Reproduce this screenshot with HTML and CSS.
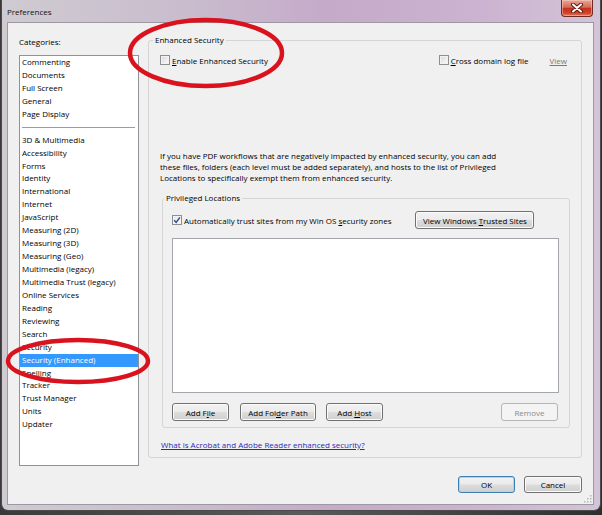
FILE: index.html
```html
<!DOCTYPE html>
<html lang="en">
<head>
    <meta charset="UTF-8">
    <title>Preferences</title>
    <link rel="stylesheet" href="styles.css">
</head>
<body>
    <div class="window">
        <div class="titlebar">
            <span class="title">Preferences</span>
            <button class="close-btn" title="Close">
                <svg width="14" height="10" viewBox="0 0 14 10">
                    <path d="M3 1.5 L11 8.5 M11 1.5 L3 8.5" stroke="#5a1a10" stroke-width="4" stroke-linecap="round"/>
                    <path d="M3 1.5 L11 8.5 M11 1.5 L3 8.5" stroke="#fff" stroke-width="2" stroke-linecap="round"/>
                </svg>
            </button>
        </div>

        <div class="client">
            <div class="main">
                <div class="sidebar">
                    <div class="cat-label">Categories:</div>
                    <ul class="cat-list">
                        <li>Commenting</li>
                        <li>Documents</li>
                        <li>Full Screen</li>
                        <li>General</li>
                        <li>Page Display</li>
                        <li class="sep"></li>
                        <li>3D &amp; Multimedia</li>
                        <li>Accessibility</li>
                        <li>Forms</li>
                        <li>Identity</li>
                        <li>International</li>
                        <li>Internet</li>
                        <li>JavaScript</li>
                        <li>Measuring (2D)</li>
                        <li>Measuring (3D)</li>
                        <li>Measuring (Geo)</li>
                        <li>Multimedia (legacy)</li>
                        <li>Multimedia Trust (legacy)</li>
                        <li>Online Services</li>
                        <li>Reading</li>
                        <li>Reviewing</li>
                        <li>Search</li>
                        <li>Security</li>
                        <li class="selected">Security (Enhanced)</li>
                        <li>Spelling</li>
                        <li>Tracker</li>
                        <li>Trust Manager</li>
                        <li>Units</li>
                        <li>Updater</li>
                    </ul>
                </div>

                <fieldset class="group enhanced">
                    <legend>Enhanced Security</legend>
                    <div class="top-row">
                        <label class="check"><span class="box"></span><span><u>E</u>nable Enhanced Security</span></label>
                        <div class="log">
                            <label class="check"><span class="box"></span><span><u>C</u>ross domain log file</span></label>
                            <a class="view-link">View</a>
                        </div>
                    </div>

                    <p class="note">
                        If you have PDF workflows that are negatively impacted by enhanced security, you can add<br>
                        these files, folders (each level must be added separately), and hosts to the list of Privileged<br>
                        Locations to specifically exempt them from enhanced security.
                    </p>

                    <fieldset class="group privileged">
                        <legend>Privileged Locations</legend>
                        <div class="trust-row">
                            <label class="check">
                                <span class="box checked">
                                    <svg width="8" height="8" viewBox="0 0 8 8"><path d="M1.2 4.2 L3.2 6.4 L6.9 1.3" fill="none" stroke="#2c4a8c" stroke-width="1.4"/></svg>
                                </span>
                                <span>Automatically trust sites from my Win OS <u>s</u>ecurity zones</span>
                            </label>
                            <button class="btn trusted">View Windows <u>T</u>rusted Sites</button>
                        </div>
                        <div class="loc-list"></div>
                        <div class="loc-buttons">
                            <button class="btn add-file">Add F<u>i</u>le</button>
                            <button class="btn add-folder">Add Fol<u>d</u>er Path</button>
                            <button class="btn add-host">Add <u>H</u>ost</button>
                            <button class="btn remove" disabled>Remove</button>
                        </div>
                    </fieldset>

                    <a class="help-link" href="#">What is Acrobat and Adobe Reader enhanced security?</a>
                </fieldset>
            </div>

            <div class="footer">
                <button class="btn default ok">OK</button>
                <button class="btn cancel">Cancel</button>
            </div>

            <svg class="grip" width="9" height="9" viewBox="0 0 9 9">
                <rect x="7" y="1" width="1.5" height="1.5" fill="#b8b8b8"/>
                <rect x="4" y="4" width="1.5" height="1.5" fill="#b8b8b8"/>
                <rect x="7" y="4" width="1.5" height="1.5" fill="#b8b8b8"/>
                <rect x="1" y="7" width="1.5" height="1.5" fill="#b8b8b8"/>
                <rect x="4" y="7" width="1.5" height="1.5" fill="#b8b8b8"/>
                <rect x="7" y="7" width="1.5" height="1.5" fill="#b8b8b8"/>
            </svg>
        </div>
    </div>

    <!-- red marks drawn over the screenshot -->
    <svg class="marks" width="602" height="515" viewBox="0 0 602 515">
        <ellipse cx="206" cy="53" rx="76" ry="33"/>
        <ellipse cx="78" cy="361" rx="70" ry="21"/>
    </svg>
</body>
</html>
```

FILE: styles.css
```css
* {
    box-sizing: border-box;
}
html, body {
    margin: 0;
}
body {
    position: relative;
    width: 602px;
    height: 515px;
    overflow: hidden;
    background: linear-gradient(90deg, #3a3a3a, #5a5a5a 50%, #2e2e2e);
    font-family: "Open Sans", "Noto Sans", sans-serif;
    font-size: 8px;
    color: #000;
}
.window {
    display: flex;
    flex-direction: column;
    width: 598px;
    height: 510px;
    margin-left: 2px;
    padding: 0 6px 5px 5px;
    background: linear-gradient(90deg, #cfcbd1 0%, #c9bdcd 30%, #c5aaca 55%, #ccb3d1 80%, #d3c4d7 100%);
    border-radius: 0 0 6px 6px;
    box-shadow: 0 0 0 1px #4b4b4b;
}
.titlebar {
    display: flex;
    justify-content: space-between;
    align-items: flex-start;
    height: 22px;
    flex-shrink: 0;
}
.title {
    margin-top: 6px;
    line-height: 12px;
    color: #111;
}
.close-btn {
    display: flex;
    align-items: center;
    justify-content: center;
    width: 32px;
    height: 17px;
    margin-right: 1px;
    padding: 0;
    border: 1px solid #6f2b22;
    border-top: none;
    border-radius: 0 0 4px 4px;
    background: linear-gradient(#e7a797 0%, #d66c57 45%, #c1331d 52%, #cf4128 80%, #e0775b 100%);
    box-shadow: inset 0 0 0 1px rgba(255, 220, 210, 0.45);
}
.client {
    position: relative;
    flex: 1;
    padding: 0 11px;
    background: #f0f0f0;
    border: 1px solid #9d98a2;
}
.main {
    display: flex;
    align-items: flex-start;
    gap: 9px;
}
.sidebar {
    width: 120px;
    flex-shrink: 0;
    padding-top: 12px;
}
.cat-label {
    height: 13px;
    line-height: 13px;
}
.cat-list {
    list-style: none;
    height: 411px;
    margin: 7px 0 0;
    padding: 0;
    background: #fff;
    border: 1px solid #8f9299;
}
.cat-list li {
    height: 12.95px;
    line-height: 12.95px;
    padding-left: 2px;
    white-space: nowrap;
}
.cat-list li.sep {
    position: relative;
}
.cat-list li.sep::after {
    content: "";
    position: absolute;
    left: 2px;
    right: 3px;
    top: 6px;
    border-top: 1px solid #6aa9dc;
}
.cat-list li.selected {
    background: #3399ff;
    color: #fff;
}

.group {
    margin: 0;
    padding: 0;
    min-width: 0;
    border: 1px solid #d5d5d5;
    border-radius: 3px;
}
.group legend {
    padding: 0 2px;
    line-height: 12px;
}
.enhanced {
    width: 434px;
    margin-top: 11px;
    padding: 8px 11px 6px;
}
.enhanced > legend {
    margin-left: -7px;
}
.top-row {
    display: flex;
    justify-content: space-between;
    align-items: center;
    height: 12px;
}
.check {
    display: inline-flex;
    align-items: center;
    gap: 2px;
    white-space: nowrap;
}
.box {
    display: inline-flex;
    align-items: center;
    justify-content: center;
    width: 10px;
    height: 10px;
    border: 1px solid #8e8f8f;
    background: linear-gradient(135deg, #d8d9db, #fbfbfb);
    box-shadow: inset 0 0 0 1px #f2f2f2;
}
.box.checked {
    background: linear-gradient(135deg, #e2e4e8, #fdfdfd);
}
.log {
    display: flex;
    align-items: center;
    gap: 21px;
    margin-right: 3px;
}
.log .check {
    margin-left: -2px;
}
.view-link {
    color: #7a7a7a;
    text-decoration: underline;
}
.note {
    margin: 84px 0 0;
    line-height: 11px;
}
.privileged {
    margin: 9px 0 0 2px;
    padding: 7px 10px 6px 9px;
}
.privileged > legend {
    margin-left: -8px;
}
.trust-row {
    display: flex;
    align-items: center;
    height: 18px;
}
.btn {
    height: 18px;
    padding: 0;
    font-family: inherit;
    font-size: 8px;
    color: #000;
    border: 1px solid #707070;
    border-radius: 3px;
    background: linear-gradient(#f2f2f2 0%, #ebebeb 48%, #dddddd 52%, #cfcfcf 100%);
    box-shadow: inset 0 0 0 1px #fbfbfb;
}
.btn.trusted {
    width: 119px;
    margin-left: 24px;
}
.loc-list {
    height: 155px;
    margin-top: 9px;
    background: #fff;
    border: 1px solid #a3a6ab;
}
.loc-buttons {
    display: flex;
    align-items: center;
    margin-top: 10px;
}
.add-file {
    width: 57px;
}
.add-folder {
    width: 76px;
    margin-left: 11px;
}
.add-host {
    width: 57px;
    margin-left: 10px;
}
.btn.remove {
    width: 57px;
    margin-left: auto;
    margin-right: 1px;
    color: #8a8a8a;
    border-color: #b2b6b9;
    background: #f4f4f4;
    box-shadow: none;
}
.help-link {
    display: block;
    margin: 11px 0 0 1px;
    line-height: 12px;
    color: #2a2ab0;
    text-decoration: underline;
}
.footer {
    display: flex;
    justify-content: flex-end;
    gap: 9px;
    margin-top: 10px;
}
.footer .btn {
    height: 17px;
}
.ok {
    width: 57px;
}
.cancel {
    width: 58px;
}
.btn.default {
    border-color: #3c7fb1;
    box-shadow: inset 0 0 0 1px #a9d8f2;
}
.grip {
    position: absolute;
    right: 1px;
    bottom: 1px;
}
.marks {
    position: absolute;
    left: 0;
    top: 0;
    pointer-events: none;
}
.marks ellipse {
    fill: none;
    stroke: #d9121d;
    stroke-width: 4.5;
}
```
